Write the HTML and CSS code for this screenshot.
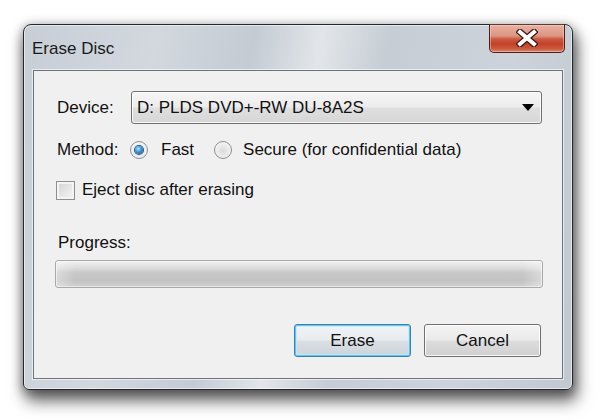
FILE: index.html
```html
<!DOCTYPE html>
<html>
<head>
<meta charset="utf-8">
<link rel="stylesheet" href="styles.css">
</head>
<body>
<div class="window">
  <div class="titlebar">
    <span class="title">Erase Disc</span>
    <div class="close">
      <svg width="22" height="18" viewBox="0 0 22 18">
        <path d="M4 3 L18 15 M18 3 L4 15" stroke="#3b1912" stroke-width="6.5" stroke-linecap="square"/>
        <path d="M4 3 L18 15 M18 3 L4 15" stroke="#ffffff" stroke-width="4" stroke-linecap="square"/>
      </svg>
    </div>
  </div>
  <div class="client">
    <div class="row device">
      <span class="label">Device:</span>
      <div class="combo">
        <span class="combo-text">D: PLDS DVD+-RW DU-8A2S</span>
        <svg class="arrow" width="12" height="7" viewBox="0 0 12 7"><polygon points="0,0 12,0 6,7" fill="#000"/></svg>
      </div>
    </div>
    <div class="row method">
      <span class="mlabel">Method:</span>
      <span class="radio checked"><span class="dot"></span></span>
      <span class="rtext fast">Fast</span>
      <span class="radio"></span>
      <span class="rtext secure">Secure (for confidential data)</span>
    </div>
    <div class="row check">
      <span class="checkbox"></span>
      <span class="ctext">Eject disc after erasing</span>
    </div>
    <div class="plabel">Progress:</div>
    <div class="progress"></div>
    <div class="buttons">
      <div class="btn default">Erase</div>
      <div class="btn">Cancel</div>
    </div>
  </div>
</div>
</body>
</html>
```
FILE: styles.css
```css
html, body {
  margin: 0;
  padding: 0;
  background: #ffffff;
}
body {
  font-family: "Liberation Sans", Arial, sans-serif;
  font-size: 17px;
  color: #111;
  height: 420px;
}
.window {
  box-sizing: border-box;
  width: 550px;
  height: 366px;
  margin: 24px 0 0 23px;
  border: 1px solid #24282c;
  border-radius: 8px 8px 6px 6px;
  background: linear-gradient(100deg, #c7ced6 0%, #d2d8de 22%, #c4cbd3 38%, #e2e6ea 49%, #c6cdd4 60%, #cdd3da 80%, #c1c8d0 100%);
  box-shadow: 3px 10px 16px 1px rgba(0,0,0,0.6), 0 2px 10px 2px rgba(0,0,0,0.25), inset 0 0 0 1px rgba(255,255,255,0.55);
  display: flex;
  flex-direction: column;
}
.titlebar {
  height: 45px;
  display: flex;
  align-items: center;
  padding-left: 8px;
  flex: none;
}
.title {
  font-family: "Liberation Sans", Arial, sans-serif;
  font-size: 17px;
  color: #1a1a1a;
  margin-top: 2px;
}
.close {
  align-self: flex-start;
  margin-left: auto;
  margin-right: 7px;
  margin-top: -1px;
  box-sizing: border-box;
  width: 76px;
  height: 29px;
  border: 1px solid #4a2019;
  border-top-color: #5a3a33;
  border-radius: 0 0 5px 5px;
  background: linear-gradient(180deg, #e9b1a2 0%, #dd9583 40%, #cc5a40 52%, #c2402a 70%, #cd5a40 88%, #dc8a6c 100%);
  box-shadow: inset 0 0 0 1px rgba(255,220,210,0.45);
  display: flex;
  align-items: center;
  justify-content: center;
}
.close svg { margin-top: -1px; }
.client {
  flex: 1;
  margin: 0 9px 10px 9px;
  border: 1px solid #6e747c;
  box-shadow: 0 0 0 1px rgba(255,255,255,0.6);
  background: #f0f0f0;
  padding: 20px 20px 21px 21px;
  display: flex;
  flex-direction: column;
}
.row {
  display: flex;
  align-items: center;
}
.device {
  padding-left: 2px;
  height: 33px;
}
.label {
  width: 74px;
  flex: none;
}
.combo {
  flex: 1;
  box-sizing: border-box;
  height: 33px;
  border: 1px solid #707070;
  border-radius: 3px;
  background: linear-gradient(180deg, #f6f6f6 0%, #ececec 48%, #dfdfdf 52%, #d6d6d6 100%);
  box-shadow: inset 0 0 0 1px rgba(255,255,255,0.8);
  display: flex;
  align-items: center;
  padding: 0 7px 0 5px;
}
.combo-text { flex: 1; }
.arrow { flex: none; }
.method {
  margin-top: 14px;
  height: 24px;
  padding-left: 2px;
}
.mlabel { width: 60px; flex: none; margin-right: 13px; }
.radio {
  box-sizing: border-box;
  width: 18px;
  height: 18px;
  border-radius: 50%;
  border: 1px solid #8c8e90;
  background: radial-gradient(circle at 50% 55%, #dcdcdc 0%, #eaeaea 45%, #fafafa 80%);
  display: flex;
  align-items: center;
  justify-content: center;
  flex: none;
}
.radio .dot {
  width: 8px;
  height: 8px;
  border-radius: 50%;
  background: radial-gradient(circle at 40% 35%, #b8e6ff 0%, #3a93d4 45%, #135c98 100%);
  box-shadow: 0 0 0 1px #1e5b8a;
}
.rtext { margin-left: 13px; }
.rtext.fast { margin-right: 20px; }
.rtext.secure { margin-left: 11px; }
.check {
  margin-top: 16px;
  height: 24px;
  padding-left: 1px;
}
.checkbox {
  box-sizing: border-box;
  width: 19px;
  height: 19px;
  border: 1px solid #8e8f8f;
  background: linear-gradient(135deg, #d2d2d2 0%, #e8e8e8 60%, #f6f6f6 100%);
  box-shadow: inset 0 0 0 2px #f4f4f4;
  flex: none;
}
.ctext { margin-left: 7px; }
.plabel {
  margin-top: 31px;
  line-height: 20px;
  padding-left: 3px;
}
.progress {
  margin-top: 7px;
  margin-right: -1px;
  height: 28px;
  box-sizing: border-box;
  border: 1px solid #a9a9a9;
  border-radius: 3px;
  background:
    linear-gradient(90deg, rgba(255,255,255,0.35) 0%, rgba(255,255,255,0) 4%, rgba(255,255,255,0) 96%, rgba(255,255,255,0.35) 100%),
    linear-gradient(180deg, #f0f0f0 0%, #dedede 25%, #c8c8c8 45%, #c3c3c3 75%, #d0d0d0 100%);
  box-shadow: inset 0 0 0 1px rgba(255,255,255,0.5);
}
.buttons {
  margin-top: 36px;
  display: flex;
  justify-content: flex-end;
  gap: 13px;
  margin-right: 1px;
}
.btn {
  box-sizing: border-box;
  width: 117px;
  height: 33px;
  border: 1px solid #707070;
  border-radius: 3px;
  background: linear-gradient(180deg, #f3f3f3 0%, #ebebeb 48%, #dddddd 52%, #d0d0d0 100%);
  box-shadow: inset 0 0 0 1px rgba(255,255,255,0.85);
  display: flex;
  align-items: center;
  justify-content: center;
  color: #111;
}
.btn.default {
  border-color: #3c7fb1;
  box-shadow: inset 0 0 0 1px #5cc8ef, inset 0 0 0 2px rgba(190,232,250,0.7);
  background: linear-gradient(180deg, #f1f4f6 0%, #e8ecef 48%, #d9dfe3 52%, #cdd4da 100%);
}
```
